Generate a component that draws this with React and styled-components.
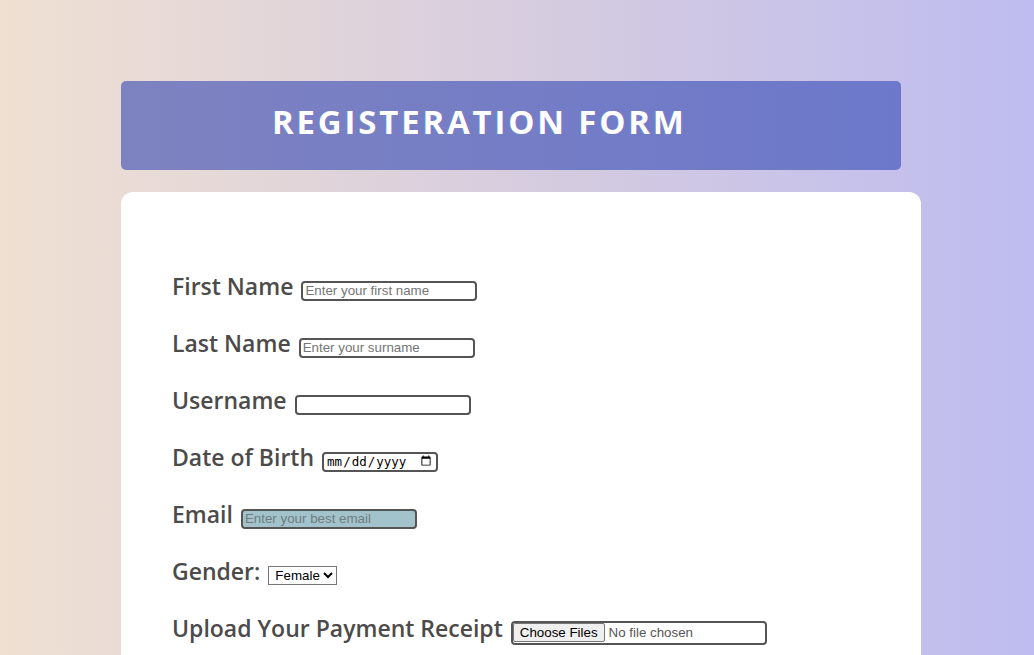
import React from 'react'
import styled, { createGlobalStyle } from 'styled-components'

const GlobalStyle = createGlobalStyle`
  html, body {
    margin: 0;
    padding: 0;
  }
  body {
    min-height: 655px;
    background: linear-gradient(to right, #f0e0d2, #d4cbe0 55%, #bebcf0);
    font-family: "Open Sans", "DejaVu Sans", sans-serif;
    overflow: hidden;
  }
`

const Page = styled.div`
  width: 800px;
  margin-left: 121px;
  padding-top: 81px;
`

const Banner = styled.header`
  width: 780px;
  height: 89px;
  box-sizing: border-box;
  border-radius: 5px;
  background: linear-gradient(to right, #7d82c0, #6c78ca);
  display: flex;
  align-items: center;
  padding-left: 151px;
  padding-bottom: 9px;
`

const Title = styled.h1`
  margin: 0;
  color: #fff;
  font-family: "Open Sans", "DejaVu Sans", sans-serif;
  font-weight: 700;
  font-size: 33px;
  letter-spacing: 2.8px;
  line-height: 1;
  text-shadow: 1px 0 0 rgba(255, 0, 128, 0.15), -1px 0 0 rgba(0, 200, 255, 0.2);
`

const Card = styled.form`
  margin-top: 22px;
  background: #fff;
  border-radius: 12px;
  padding: 78px 51px 40px;
  min-height: 600px;
`

const Field = styled.div`
  display: flex;
  align-items: baseline;
  height: 33px;
  margin-bottom: 24px;
  white-space: nowrap;
`

const Label = styled.label`
  font-family: "Open Sans", "DejaVu Sans", sans-serif;
  font-size: 23px;
  line-height: 33px;
  font-weight: 600;
  color: #4d4b4a;
  margin-right: 8px;
`

const TextInput = styled.input`
  width: 176px;
  height: 20px;
  box-sizing: border-box;
  border: 2px solid #555;
  border-radius: 4px;
  padding: 1px 2px;
  font-family: "Liberation Sans", Arial, sans-serif;
  font-size: 13.33px;
  background: ${({ $tint }) => $tint || '#fff'};
  &::placeholder {
    color: ${({ $tint }) => ($tint ? '#6f7c80' : '#757575')};
  }
`

const DateInput = styled(TextInput)`
  width: 116px;
  font-family: "DejaVu Sans Mono", monospace;
  font-size: 12.5px;
`

const Select = styled.select`
  height: 19px;
  border: 1px solid #767676;
  border-radius: 0;
  font-family: "Liberation Sans", Arial, sans-serif;
  font-size: 13.33px;
  padding: 0 0 0 2px;
  background: #fff;
  color: #000;
`

const FileInput = styled.input`
  width: 256px;
  height: 24px;
  box-sizing: border-box;
  border: 2px solid #555;
  border-radius: 4px;
  font-family: "Liberation Sans", Arial, sans-serif;
  font-size: 13.33px;
  color: #555;
  &::file-selector-button {
    font-family: "Liberation Sans", Arial, sans-serif;
    font-size: 13.33px;
    color: #000;
    background: #efefef;
    border: 1px solid #767676;
    border-radius: 2px;
    padding: 1px 6px;
    margin-right: 4px;
  }
`

export default function App() {
  return (
    <>
      <GlobalStyle />
      <Page>
        <Banner>
          <Title>REGISTERATION FORM</Title>
        </Banner>
        <Card>
          <Field>
            <Label htmlFor="first">First Name</Label>
            <TextInput id="first" placeholder="Enter your first name" />
          </Field>
          <Field>
            <Label htmlFor="last">Last Name</Label>
            <TextInput id="last" placeholder="Enter your surname" />
          </Field>
          <Field>
            <Label htmlFor="user">Username</Label>
            <TextInput id="user" />
          </Field>
          <Field>
            <Label htmlFor="dob">Date of Birth</Label>
            <DateInput id="dob" type="date" />
          </Field>
          <Field>
            <Label htmlFor="email">Email</Label>
            <TextInput id="email" $tint="#a2c3cc" placeholder="Enter your best email" />
          </Field>
          <Field>
            <Label htmlFor="gender">Gender:</Label>
            <Select id="gender" defaultValue="female">
              <option value="female">Female</option>
              <option value="male">Male</option>
            </Select>
          </Field>
          <Field>
            <Label htmlFor="receipt">Upload Your Payment Receipt</Label>
            <FileInput id="receipt" type="file" multiple />
          </Field>
        </Card>
      </Page>
    </>
  )
}
